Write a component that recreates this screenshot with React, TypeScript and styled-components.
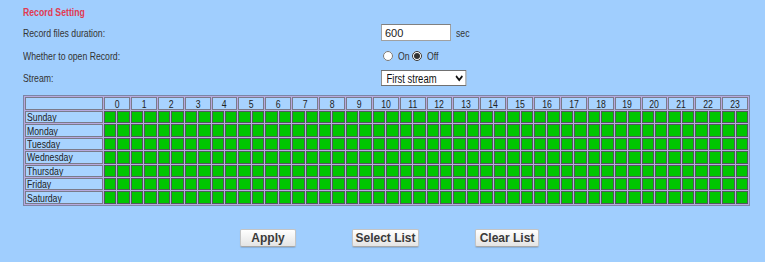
import React from "react";
import styled, { createGlobalStyle } from "styled-components";

const FONT = `"Liberation Sans", Arial, sans-serif`;

const Global = createGlobalStyle`
  html, body { margin: 0; padding: 0; background: #a0cefe; }
  body { font-family: ${FONT}; font-size: 11px; color: #333; }
`;

const Page = styled.div`
  width: 765px;
  height: 262px;
  box-sizing: border-box;
  padding: 6px 0 0 23px;
  background: #a0cefe;
`;

/* text in the reference is drawn in a narrow face: squeeze it horizontally */
const Narrow = styled.span<{ $origin?: string }>`
  display: inline-block;
  white-space: nowrap;
  transform: scaleX(0.79);
  transform-origin: ${(p) => p.$origin ?? "left"} center;
`;

const Title = styled.div`
  color: #e03a52;
  font-weight: bold;
  font-size: 11px;
  height: 12px;
  line-height: 12px;
`;

const Form = styled.div`
  display: grid;
  grid-template-columns: 358px auto;
  margin-top: 5px;
`;

const Label = styled.div<{ $h: number }>`
  height: ${(p) => p.$h}px;
  display: flex;
  align-items: center;
  font-size: 11px;
  color: #333;
`;

const Field = styled.div<{ $h: number }>`
  height: ${(p) => p.$h}px;
  display: flex;
  align-items: center;
  gap: 5px;
  font-size: 11px;
`;

const TextInput = styled.input`
  width: 70px;
  height: 17px;
  box-sizing: border-box;
  border: 1px solid #a0a0a0;
  border-top-color: #808080;
  background: #fff;
  padding: 0 3px;
  margin: 0;
  font-family: ${FONT};
  font-size: 11px;
  color: #222;
  outline: none;
`;

const Radio = styled.input`
  width: 10px;
  height: 10px;
  margin: 0 5px 0 2px;
  accent-color: #333;
`;

const RadioLabel = styled.label<{ $w: number }>`
  display: inline-flex;
  align-items: center;
  font-size: 11px;
  & > span {
    width: ${(p) => p.$w}px;
  }
`;

const RadioGroup = styled.div`
  display: flex;
  align-items: center;
`;

const SelectBox = styled.div`
  width: 85px;
  height: 16px;
  display: flex;
`;

const Select = styled.select`
  flex: none;
  width: 108px;
  height: 16px;
  box-sizing: border-box;
  border: 1px solid #707070;
  background: #fff;
  font-family: ${FONT};
  font-size: 12px;
  color: #111;
  padding: 0 0 0 2px;
  margin: 0;
  border-radius: 0;
  transform: scaleX(0.79);
  transform-origin: left center;
`;

const Grid = styled.table`
  margin-top: 9px;
  width: 727px;
  border-collapse: separate;
  border-spacing: 1px;
  border: 1px solid #7c86a6;
  background: #b7a9df;
  table-layout: fixed;
`;

const HeadCell = styled.th`
  height: 11px;
  padding: 0;
  border: 1px solid #7a7a8a;
  background: #a8d3ff;
  font-weight: normal;
  font-size: 11px;
  line-height: 10px;
  color: #222;
  text-align: center;
`;

const DayCell = styled.td`
  height: 10.4px;
  padding: 0 0 0 1px;
  border: 1px solid #7a7a8a;
  background: #a8d3ff;
  font-size: 11px;
  line-height: 10px;
  color: #222;
  text-align: left;
  white-space: nowrap;
  overflow: hidden;
`;

const Slot = styled.td<{ $on: boolean }>`
  padding: 0;
  border: 1px solid #4f5a5a;
  background: ${(p) => (p.$on ? "#00c600" : "#ffffff")};
`;

const Buttons = styled.div`
  display: flex;
  gap: 56px;
  padding-left: 217px;
  margin-top: 23px;
`;

const Button = styled.button<{ $w: number }>`
  width: ${(p) => p.$w}px;
  height: 18px;
  box-sizing: border-box;
  padding: 0;
  border: 1px solid #c4c4c4;
  border-bottom-color: #a8a8a8;
  border-radius: 2px;
  background: linear-gradient(#ffffff, #e4e4e4);
  box-shadow: 0 1px 1px rgba(0, 0, 0, 0.15);
  font-family: ${FONT};
  font-weight: bold;
  font-size: 12px;
  color: #3a3a3a;
  cursor: pointer;
`;

const days = ["Sunday", "Monday", "Tuesday", "Wednesday", "Thursday", "Friday", "Saturday"];
const hours = Array.from({ length: 24 }, (_, i) => i);
const halves = Array.from({ length: 48 }, (_, i) => i);

export default function App() {
  return (
    <>
      <Global />
      <Page>
        <Title>
          <Narrow>Record Setting</Narrow>
        </Title>
        <Form>
          <Label $h={19}>
            <Narrow>Record files duration:</Narrow>
          </Label>
          <Field $h={19}>
            <TextInput defaultValue="600" />
            <Narrow>sec</Narrow>
          </Field>
          <Label $h={28}>
            <Narrow>Whether to open Record:</Narrow>
          </Label>
          <Field $h={28}>
            <RadioGroup>
              <RadioLabel $w={12}>
                <Radio type="radio" name="rec" />
                <Narrow>On</Narrow>
              </RadioLabel>
              <RadioLabel $w={15}>
                <Radio type="radio" name="rec" defaultChecked />
                <Narrow>Off</Narrow>
              </RadioLabel>
            </RadioGroup>
          </Field>
          <Label $h={16}>
            <Narrow>Stream:</Narrow>
          </Label>
          <Field $h={16}>
            <SelectBox>
              <Select defaultValue="1">
                <option value="1">First stream</option>
                <option value="2">Second stream</option>
              </Select>
            </SelectBox>
          </Field>
        </Form>
        <Grid>
          <colgroup>
            <col style={{ width: 78 }} />
            {halves.map((h) => (
              <col key={h} />
            ))}
          </colgroup>
          <thead>
            <tr>
              <HeadCell />
              {hours.map((h) => (
                <HeadCell key={h} colSpan={2}>
                  <Narrow $origin="center">{h}</Narrow>
                </HeadCell>
              ))}
            </tr>
          </thead>
          <tbody>
            {days.map((d) => (
              <tr key={d}>
                <DayCell>
                  <Narrow>{d}</Narrow>
                </DayCell>
                {halves.map((h) => (
                  <Slot key={h} $on={true} />
                ))}
              </tr>
            ))}
          </tbody>
        </Grid>
        <Buttons>
          <Button $w={56}>Apply</Button>
          <Button $w={67}>Select List</Button>
          <Button $w={64}>Clear List</Button>
        </Buttons>
      </Page>
    </>
  );
}
